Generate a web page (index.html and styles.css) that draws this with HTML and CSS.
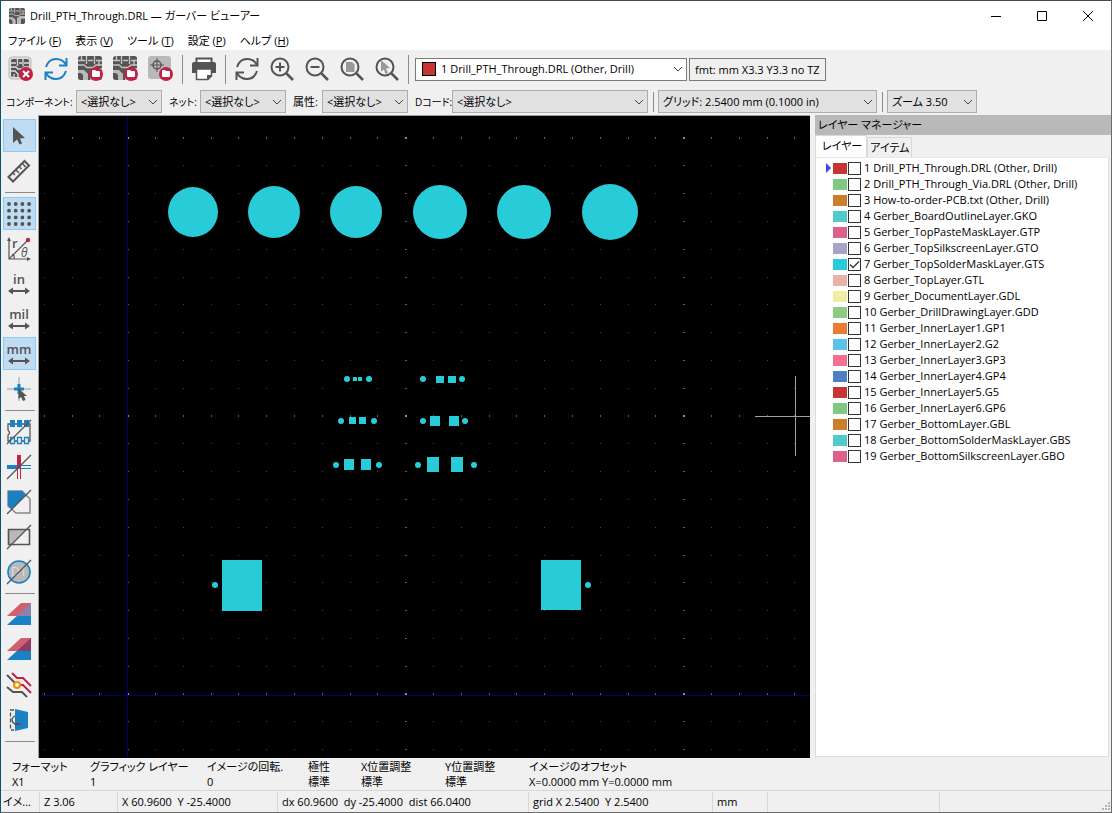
FILE: index.html
```html
<!DOCTYPE html>
<html lang="ja">
<head>
<meta charset="utf-8">
<title>Drill_PTH_Through.DRL — ガーバー ビューアー</title>
<link rel="stylesheet" href="styles.css">
</head>
<body>
<svg class="defs" width="0" height="0" aria-hidden="true">
  <defs>
    <g id="board">
      <rect width="24" height="24" rx="2.500" fill="#545454"/>
      <path d="M10 24V18L6 14H0V17H3L5 19V24ZM12 24V15L16 12H24V16H18V24Z" fill="#b9b9b9"/>
      <path d="M0 4.500H7M10 4.500H15M18 4.500H24M8.500 0V8M16.500 0V8M3.500 0V4M21 5V10M0 9H6L9 11.500H15L18 9H24" fill="none" stroke="#c4c4c4" stroke-width="1.400"/>
    </g>
    <g id="folder-badge">
      <circle cx="18" cy="18" r="7" fill="#c22147"/>
      <path d="M14 15Q14 14 15 14H17L18 15H21Q22 15 22 16V20Q22 21 21 21H15Q14 21 14 20Z" fill="#fff"/>
    </g>
    <g id="refresh" fill="none" stroke-width="2">
      <path d="M2 10C4 4 8 2 12 2C16 2 20 4 22 8M22 14C20 20 16 22 12 22C8 22 4 20 2 16"/>
      <path d="M22.500 1V8.500H15M1.500 23V15.500H9"/>
    </g>
    <g id="lens" fill="none" stroke="#545454">
      <circle cx="10" cy="10" r="8.500" stroke-width="2"/>
      <path d="M16.500 16.500L23 23" stroke-width="2.500"/>
    </g>
    <g id="span-arrow" fill="#545454">
      <path d="M1 19L6 15.500V18H18V15.500L23 19L18 22.500V20H6V22.500Z"/>
    </g>
    <path id="grid-row" d="M0 0h1v1h-1zM28 0h1v1h-1zM56 0h1v1h-1zM84 0h1v1h-1zM111 0h1v1h-1zM139 0h1v1h-1zM167 0h1v1h-1zM195 0h1v1h-1zM223 0h1v1h-1zM250 0h1v1h-1z"/>
    <pattern id="grid" x="127" y="137" width="278" height="278" patternUnits="userSpaceOnUse">
      <g fill="#484848">
        <use href="#grid-row" y="28"/><use href="#grid-row" y="56"/><use href="#grid-row" y="84"/><use href="#grid-row" y="112"/><use href="#grid-row" y="140"/><use href="#grid-row" y="167"/><use href="#grid-row" y="195"/><use href="#grid-row" y="223"/><use href="#grid-row" y="251"/>
      </g>
      <g fill="#606060"><use href="#grid-row"/><use href="#grid-row" y="1"/></g>
      <path d="M0 28h2v1h-2zM0 56h2v1h-2zM0 84h2v1h-2zM0 112h2v1h-2zM0 140h2v1h-2zM0 167h2v1h-2zM0 195h2v1h-2zM0 223h2v1h-2zM0 251h2v1h-2z" fill="#606060"/>
      <path d="M0 0h2v2h-2z" fill="#909090"/>
    </pattern>
  </defs>
</svg>

<div class="window">
  <header class="titlebar">
    <svg class="app-icon" viewBox="0 0 24 24" aria-hidden="true"><use href="#board"/></svg>
    <h1 class="title">Drill_PTH_Through.DRL — ガーバー ビューアー</h1>
    <div class="window-buttons">
      <button class="window-button" aria-label="最小化"><svg width="12" height="12" viewBox="0 0 12 12"><path d="M1 6.500H11" stroke="#000"/></svg></button>
      <button class="window-button" aria-label="最大化"><svg width="12" height="12" viewBox="0 0 12 12"><path d="M1.500 1.500H10.500V10.500H1.500Z" fill="none" stroke="#000"/></svg></button>
      <button class="window-button" aria-label="閉じる"><svg width="12" height="12" viewBox="0 0 12 12"><path d="M1 1L11 11M11 1L1 11" stroke="#000"/></svg></button>
    </div>
  </header>

  <nav class="menubar">
    <button class="menu">ファイル (<u>F</u>)</button>
    <button class="menu">表示 (<u>V</u>)</button>
    <button class="menu">ツール (<u>T</u>)</button>
    <button class="menu">設定 (<u>P</u>)</button>
    <button class="menu">ヘルプ (<u>H</u>)</button>
  </nav>

  <div class="toolbar">
    <button class="tool" aria-label="全レイヤーをクリア"><svg viewBox="0 0 26 26">
      <rect x="1" y="1" width="22" height="22" rx="3" fill="#dedede" stroke="#b9b9b9"/>
      <rect x="3" y="3" width="18" height="18" rx="2" fill="#545454"/>
      <path d="M3 7H8M11 7H14M16 7H21M9.500 3V10M15 3V10M3 11H8L10 13H14L16 11H21M3 15H7L10 18V21M13 21V16H21M6 18V21" fill="none" stroke="#dedede" stroke-width="1.300"/>
      <circle cx="18" cy="18" r="7" fill="#c22147"/><path d="M15 15L21 21M21 15L15 21" stroke="#fff" stroke-width="2"/></svg></button>
    <button class="tool" aria-label="全レイヤーを再読み込み"><svg viewBox="-1 -1 26 26"><use href="#refresh" stroke="#1a81c4"/></svg></button>
    <button class="tool" aria-label="ガーバーを開く"><svg viewBox="0 0 26 26"><use href="#board"/><use href="#folder-badge"/></svg></button>
    <button class="tool" aria-label="ガーバージョブを開く"><svg viewBox="0 0 26 26"><use href="#board"/><use href="#folder-badge"/></svg></button>
    <button class="tool" aria-label="ドリルファイルを開く"><svg viewBox="0 0 26 26"><rect width="23" height="23" rx="3" fill="#b9b9b9"/><g fill="none" stroke="#545454"><circle cx="9" cy="9" r="4" stroke-width="1.500"/><path d="M9 2V16M2 9H16"/></g><use href="#folder-badge"/></svg></button>
    <span class="rule"></span>
    <button class="tool" aria-label="印刷"><svg viewBox="0 0 26 26"><path d="M5.500 7V2.500H20.500V7" fill="#fff" stroke="#545454" stroke-width="2"/><path d="M1 8Q1 6 3 6H23Q25 6 25 8V17H1Z" fill="#545454"/><path d="M5.500 13H20.500V20L17 23.500H5.500Z" fill="#fff" stroke="#545454" stroke-width="1.500"/><path d="M16 24V19H21" fill="#545454"/></svg></button>
    <span class="rule"></span>
    <button class="tool" aria-label="再描画"><svg viewBox="-1 -1 26 26"><use href="#refresh" stroke="#545454"/></svg></button>
    <button class="tool" aria-label="ズームイン"><svg viewBox="-1 -1 26 26"><use href="#lens"/><path d="M10 5.500V14.500M5.500 10H14.500" stroke="#545454" stroke-width="2"/></svg></button>
    <button class="tool" aria-label="ズームアウト"><svg viewBox="-1 -1 26 26"><use href="#lens"/><path d="M5.500 10H14.500" stroke="#545454" stroke-width="2"/></svg></button>
    <button class="tool" aria-label="全体表示"><svg viewBox="-1 -1 26 26"><use href="#lens"/><path d="M6 5H12L14.500 7.500V15H6Z" fill="#999"/></svg></button>
    <button class="tool" aria-label="選択範囲を拡大"><svg viewBox="-1 -1 26 26"><use href="#lens"/><path d="M6 3L15 11L11 11.500L13 16L10.500 17L9 12.500L6 14.500Z" fill="#999"/></svg></button>
    <span class="rule"></span>
    <div class="layer-pick"><span class="chip"></span><select class="combo combo-white" aria-label="レイヤー"><option>1 Drill_PTH_Through.DRL (Other, Drill)</option></select></div>
    <input class="format" aria-label="フォーマット" readonly value="fmt: mm X3.3 Y3.3 no TZ">
  </div>

  <div class="filters">
    <label class="filter-label label-component" for="component">コンポーネント:</label><select class="combo combo-small" id="component"><option>&lt;選択なし&gt;</option></select>
    <label class="filter-label label-net" for="net">ネット:</label><select class="combo combo-small" id="net"><option>&lt;選択なし&gt;</option></select>
    <label class="filter-label label-attr" for="attr">属性:</label><select class="combo combo-small" id="attr"><option>&lt;選択なし&gt;</option></select>
    <label class="filter-label label-dcode" for="dcode">Dコード:</label><select class="combo combo-dcode" id="dcode"><option>&lt;選択なし&gt;</option></select>
    <span class="rule rule-filter"></span>
    <select class="combo combo-grid" aria-label="グリッド"><option>グリッド: 2.5400 mm (0.1000 in)</option></select>
    <span class="rule rule-filter"></span>
    <select class="combo combo-zoom" aria-label="ズーム"><option>ズーム 3.50</option></select>
  </div>

  <main class="work">
    <aside class="side">
      <button class="tool tool-on" aria-label="選択"><svg viewBox="0 0 24 24"><path d="M6 3V19L10 15.500L12.500 20.500L15 19.500L13 14.500L18 14Z" fill="#545454"/></svg></button>
      <button class="tool" aria-label="計測"><svg viewBox="0 0 24 24"><g fill="none" stroke="#545454" stroke-width="2"><path d="M1.500 18L17.500 2L22 6.500L6 22.500Z"/><path d="M6 14L8 16M9 11L12 14M12.500 8L14.500 10M16 5L18.500 8" stroke-width="1.500"/></g></svg></button>
      <span class="divider"></span>
      <button class="tool tool-on" aria-label="グリッド"><svg viewBox="0 0 24 24"><path d="M2 2H22.500M2 8.700H22.500M2 15.400H22.500M2 22H22.500" stroke="#545454" stroke-width="3.800" stroke-linecap="round" stroke-dasharray="0 6.700"/></svg></button>
      <button class="tool" aria-label="極座標"><svg viewBox="0 0 24 24"><path d="M2 3V22H21M2 22L20 4M7 22Q8 18 5 17" fill="none" stroke="#545454" stroke-width="1.200"/><path d="M0 4L2 0L4 4ZM20 20L24 22L20 24Z" fill="#545454"/><circle cx="21" cy="3" r="2.200" fill="#c22147"/><text class="glyph-large" x="5" y="11">r</text><text class="glyph-theta" x="14" y="20">θ</text></svg></button>
      <button class="tool" aria-label="インチ"><svg viewBox="0 0 24 24"><text class="glyph" x="12" y="12">in</text><use href="#span-arrow"/></svg></button>
      <button class="tool" aria-label="ミル"><svg viewBox="0 0 24 24"><text class="glyph" x="12" y="12">mil</text><use href="#span-arrow"/></svg></button>
      <button class="tool tool-on" aria-label="ミリメートル"><svg viewBox="0 0 24 24"><text class="glyph" x="12" y="12">mm</text><use href="#span-arrow"/></svg></button>
      <button class="tool" aria-label="カーソル形状"><svg viewBox="0 0 24 24"><path d="M12 0V24M0 12H24" stroke="#999"/><path d="M12 7V17M7 12H17" stroke="#1a81c4" stroke-width="3"/><path d="M11.500 11.500V22L14 20L16 24L18.500 23L17 19H20Z" fill="#545454"/></svg></button>
      <span class="divider"></span>
      <button class="tool" aria-label="フラッシュ部をスケッチ"><svg viewBox="0 0 24 24"><path d="M1 4H23V21H1V15Q4 13 1 10Z" fill="none" stroke="#545454" stroke-width="1.300"/><path d="M3 0H8V7H3ZM10 0H15V7H10ZM17 0H22V7H17Z" fill="#1a81c4"/><path d="M3.500 17.500H7.500V23.500H3.500ZM10.500 17.500H14.500V23.500H10.500ZM17.500 17.500H21.500V23.500H17.500Z" fill="#f0f0f0" stroke="#1a81c4" stroke-width="1.300"/><path d="M0 24L24 0" stroke="#545454" stroke-width="1.300"/></svg></button>
      <button class="tool" aria-label="ラインをスケッチ"><svg viewBox="0 0 24 24"><path d="M0 12H13" stroke="#1a81c4" stroke-width="4"/><path d="M12 10.500H24M12 13.500H24" stroke="#1a81c4"/><path d="M12 0V12" stroke="#c22147" stroke-width="4"/><path d="M10.500 11V24M13.500 11V24" stroke="#c22147"/><path d="M0 24L24 0" stroke="#545454" stroke-width="1.300"/></svg></button>
      <button class="tool" aria-label="ポリゴンをスケッチ"><svg viewBox="0 0 24 24"><path d="M1 1H15L23 9V23H9L1 16Z" fill="#f0f0f0" stroke="#888" stroke-width="1.500"/><path d="M1 1H15L19 5L5 19L1 16Z" fill="#1a81c4"/><path d="M0 24L24 0" stroke="#545454" stroke-width="1.300"/></svg></button>
      <button class="tool" aria-label="ネガティブ表示"><svg viewBox="0 0 24 24"><path d="M1.500 4.500H22.500V19.500H1.500Z" fill="#f0f0f0"/><path d="M1.500 4.500H19.500L4.500 19.500H1.500Z" fill="#b9b9b9"/><path d="M1.500 4.500H22.500V19.500H1.500Z" fill="none" stroke="#545454" stroke-width="1.600"/><path d="M0 24L24 0" stroke="#545454" stroke-width="1.300"/></svg></button>
      <button class="tool" aria-label="Dコード表示"><svg viewBox="0 0 24 24"><circle cx="12" cy="12" r="11" fill="#b9b9b9" stroke="#1a81c4" stroke-width="1.600"/><text class="glyph-code" x="4" y="16">D1</text><path d="M0 24L24 0" stroke="#545454" stroke-width="1.300"/></svg></button>
      <span class="divider"></span>
      <button class="tool" aria-label="差分モード"><svg viewBox="0 0 24 24"><path d="M0 22L12 11H24V22Z" fill="#1a81c4"/><path d="M0 13L14 0H24V13Z" fill="#d0606f"/><path d="M10 13L24 0V13Z" fill="#8b82ad"/></svg></button>
      <button class="tool" aria-label="XORモード"><svg viewBox="0 0 24 24"><path d="M0 22L12 11H24V22Z" fill="#1a81c4"/><path d="M0 13L14 0H24V13Z" fill="#d0606f"/><path d="M10 13L24 0V13Z" fill="#8b3c65"/></svg></button>
      <button class="tool" aria-label="高コントラスト"><svg viewBox="0 0 24 24"><g fill="none" stroke-width="2"><path d="M5 0L10 5H16L24 13M11 12H16L24 20" stroke="#c22147"/><path d="M0 2L8 10M0 14L6 19H15L20 24" stroke="#545454"/><circle cx="10" cy="12" r="3" fill="#f0f0f0" stroke="#f29100"/></g></svg></button>
      <button class="tool" aria-label="反転表示"><svg viewBox="0 0 24 24"><path d="M8 1L21 4V20L8 23Z" fill="#1a81c4"/><path d="M7 2H3.500V22H7" fill="none" stroke="#545454" stroke-width="1.300" stroke-dasharray="4 2"/><path d="M8 8Q5 9 5 12Q6 17 11 16" fill="none" stroke="#545454" stroke-width="1.300"/><path d="M7 15Q11 14 15 16Q11 18 8 17Z" fill="#545454"/></svg></button>
      <span class="divider"></span>
    </aside>

    <div class="canvas">
      <svg class="board-view" role="img" aria-label="Gerber_TopSolderMaskLayer.GTS">
        <g transform="translate(-39 -116)">
          <rect x="39" y="116" width="100%" height="100%" fill="url(#grid)"/>
          <path d="M127.500 116V2000M39 695.500H3000" stroke="#000070" stroke-width="1"/>
          <g fill="#28ccd9">
            <circle cx="193" cy="212" r="25"/><circle cx="274" cy="212" r="26"/><circle cx="356" cy="212" r="26"/><circle cx="440" cy="212" r="27"/><circle cx="524" cy="212" r="27"/><circle cx="610" cy="212" r="28"/>
            <path d="M353 377h4v4h-4zM358 377h4v4h-4zM436 376h8v7h-8zM448 376h8v7h-8zM349 417h7v7h-7zM359 417h7v7h-7zM430 416h10v10h-10zM449 416h10v10h-10zM344 459h10v11h-10zM361 459h10v11h-10zM427 457h12v15h-12zM451 457h12v15h-12zM222 560h40v51h-40zM541 560h40v50h-40z"/>
            <circle cx="347" cy="379" r="3"/><circle cx="369" cy="379" r="3"/><circle cx="423" cy="379" r="3"/><circle cx="462" cy="379" r="3"/>
            <circle cx="341" cy="421" r="3"/><circle cx="374" cy="421" r="3"/><circle cx="423" cy="421" r="3"/><circle cx="465" cy="421" r="3"/>
            <circle cx="336" cy="465" r="3"/><circle cx="379" cy="465" r="3"/><circle cx="418" cy="465" r="3"/><circle cx="474" cy="465" r="3"/>
            <circle cx="215" cy="585" r="3"/><circle cx="588" cy="585" r="3"/>
          </g>
          <path d="M755 416.500H836M795.500 376V456" stroke="#a0a0a0"/>
        </g>
      </svg>
    </div>

    <section class="manager">
      <h2 class="manager-title">レイヤー マネージャー</h2>
      <div class="tabs" role="tablist">
        <button class="tab tab-on" role="tab" aria-selected="true">レイヤー</button>
        <button class="tab" role="tab" aria-selected="false">アイテム</button>
      </div>
      <ul class="layers">
        <li class="layer layer-active"><span class="swatch red"></span><input class="check" type="checkbox" id="l1"><label for="l1">1 Drill_PTH_Through.DRL (Other, Drill)</label></li>
        <li class="layer"><span class="swatch green"></span><input class="check" type="checkbox" id="l2"><label for="l2">2 Drill_PTH_Through_Via.DRL (Other, Drill)</label></li>
        <li class="layer"><span class="swatch brown"></span><input class="check" type="checkbox" id="l3"><label for="l3">3 How-to-order-PCB.txt (Other, Drill)</label></li>
        <li class="layer"><span class="swatch teal"></span><input class="check" type="checkbox" id="l4"><label for="l4">4 Gerber_BoardOutlineLayer.GKO</label></li>
        <li class="layer"><span class="swatch pink"></span><input class="check" type="checkbox" id="l5"><label for="l5">5 Gerber_TopPasteMaskLayer.GTP</label></li>
        <li class="layer"><span class="swatch lavender"></span><input class="check" type="checkbox" id="l6"><label for="l6">6 Gerber_TopSilkscreenLayer.GTO</label></li>
        <li class="layer"><span class="swatch cyan"></span><input class="check" type="checkbox" id="l7" checked><label for="l7">7 Gerber_TopSolderMaskLayer.GTS</label></li>
        <li class="layer"><span class="swatch salmon"></span><input class="check" type="checkbox" id="l8"><label for="l8">8 Gerber_TopLayer.GTL</label></li>
        <li class="layer"><span class="swatch yellow"></span><input class="check" type="checkbox" id="l9"><label for="l9">9 Gerber_DocumentLayer.GDL</label></li>
        <li class="layer"><span class="swatch lime"></span><input class="check" type="checkbox" id="l10"><label for="l10">10 Gerber_DrillDrawingLayer.GDD</label></li>
        <li class="layer"><span class="swatch orange"></span><input class="check" type="checkbox" id="l11"><label for="l11">11 Gerber_InnerLayer1.GP1</label></li>
        <li class="layer"><span class="swatch sky"></span><input class="check" type="checkbox" id="l12"><label for="l12">12 Gerber_InnerLayer2.G2</label></li>
        <li class="layer"><span class="swatch rose"></span><input class="check" type="checkbox" id="l13"><label for="l13">13 Gerber_InnerLayer3.GP3</label></li>
        <li class="layer"><span class="swatch blue"></span><input class="check" type="checkbox" id="l14"><label for="l14">14 Gerber_InnerLayer4.GP4</label></li>
        <li class="layer"><span class="swatch red"></span><input class="check" type="checkbox" id="l15"><label for="l15">15 Gerber_InnerLayer5.G5</label></li>
        <li class="layer"><span class="swatch green"></span><input class="check" type="checkbox" id="l16"><label for="l16">16 Gerber_InnerLayer6.GP6</label></li>
        <li class="layer"><span class="swatch brown"></span><input class="check" type="checkbox" id="l17"><label for="l17">17 Gerber_BottomLayer.GBL</label></li>
        <li class="layer"><span class="swatch teal"></span><input class="check" type="checkbox" id="l18"><label for="l18">18 Gerber_BottomSolderMaskLayer.GBS</label></li>
        <li class="layer"><span class="swatch pink"></span><input class="check" type="checkbox" id="l19"><label for="l19">19 Gerber_BottomSilkscreenLayer.GBO</label></li>
      </ul>
    </section>
  </main>

  <dl class="info">
    <div><dt>フォーマット</dt><dd>X1</dd></div>
    <div><dt>グラフィック レイヤー</dt><dd>1</dd></div>
    <div><dt>イメージの回転.</dt><dd>0</dd></div>
    <div><dt>極性</dt><dd>標準</dd></div>
    <div><dt>X位置調整</dt><dd>標準</dd></div>
    <div><dt>Y位置調整</dt><dd>標準</dd></div>
    <div><dt>イメージのオフセット</dt><dd>X=0.0000 mm Y=0.0000 mm</dd></div>
  </dl>

  <footer class="status">
    <span>イメ...</span><span>Z 3.06</span><span>X 60.9600&nbsp; Y -25.4000</span><span>dx 60.9600&nbsp; dy -25.4000&nbsp; dist 66.0400</span><span>grid X 2.5400&nbsp; Y 2.5400</span><span>mm</span><span></span>
    <span class="grip-cell"><svg width="10" height="10" viewBox="0 0 10 10" aria-hidden="true"><path d="M7 0h2v2h-2zM4 3h2v2h-2zM7 3h2v2h-2zM1 6h2v2h-2zM4 6h2v2h-2zM7 6h2v2h-2z" fill="#b4b4b4"/></svg></span>
  </footer>
</div>
</body>
</html>
```
FILE: styles.css
```css
* { box-sizing: border-box; }

body {
  margin: 0;
  background: #f0f0f0;
  color: #000;
  font: 11px/16px "Open Sans", "Noto Sans CJK JP", sans-serif;
  font-feature-settings: "palt";
}

button, select, input { font: inherit; font-feature-settings: inherit; color: inherit; }
button { padding: 0; border: 0; background: none; }

.defs { position: absolute; }

.window {
  display: flex;
  flex-direction: column;
  min-height: 100vh;
  border: 1px solid #6a6a6a;
  border-left-color: #10506f;
  border-top-color: #3c4c58;
}

.titlebar { display: flex; align-items: center; height: 29px; padding-left: 8px; background: #fff; }
.app-icon { width: 16px; height: 16px; margin-right: 5px; }
.title { flex: 1; margin: 0; font-size: 11px; font-weight: 400; }
.window-buttons { display: flex; }
.window-button { width: 46px; height: 28px; display: grid; place-items: center; }

.menubar { display: flex; gap: 14px; height: 20px; padding: 2px 0 0 7px; background: #fff; white-space: nowrap; }

.toolbar { display: flex; align-items: center; gap: 2px; height: 38px; padding-left: 3px; }
.tool { flex: none; width: 33px; height: 33px; display: grid; place-items: center; border: 1px solid transparent; }
.tool svg { width: 24px; height: 24px; overflow: visible; }
.toolbar .tool svg { width: 26px; height: 26px; }
.tool-on { background: #c0dcf3; border-color: #90c8f6; }
.rule { flex: none; width: 6px; height: 29px; display: flex; justify-content: center; }
.rule::before { content: ""; width: 1px; background: #8c8c8c; }
.rule-filter { height: 20px; margin: 0 2px; }

.glyph, .glyph-large { font: 600 13px "Open Sans", sans-serif; fill: #545454; }
.glyph { text-anchor: middle; }
.glyph-theta { font: italic 12px "Open Sans", sans-serif; fill: #545454; }
.glyph-code { font: 12px "Open Sans", sans-serif; fill: #dedede; }

.combo {
  flex: none;
  height: 23px;
  padding: 0 20px 0 4px;
  border: 1px solid #adadad;
  border-radius: 0;
  appearance: none;
  background: #e1e1e1 url("data:image/svg+xml,%3Csvg xmlns='http://www.w3.org/2000/svg' width='10' height='6'%3E%3Cpath d='M1 1L5 5L9 1' fill='none' stroke='%23444'/%3E%3C/svg%3E") no-repeat right 3px center;
}
.layer-pick { position: relative; flex: none; width: 272px; margin-left: 2px; }
.combo-white { width: 100%; padding-left: 25px; background-color: #fff; border-color: #7a7a7a; vertical-align: top; }
.chip { position: absolute; left: 7px; top: 4px; width: 14px; height: 14px; background: #c83434; border: 1px solid #000; }
.format { width: 137px; height: 23px; padding: 0 5px; border: 1px solid #7a7a7a; background: #f0f0f0; }

.filters { display: flex; align-items: center; height: 27px; padding-left: 5px; white-space: nowrap; }
.filter-label { flex: none; font-size: 10px; }
.label-component { width: 70px; }
.label-net, .label-attr, .label-dcode { padding-left: 7px; }
.label-net { width: 38px; }
.label-attr { width: 36px; font-size: 11px; }
.label-dcode { width: 44px; }
.combo-small { width: 86px; }
.combo-dcode { width: 196px; }
.combo-grid { width: 219px; }
.combo-zoom { width: 90px; }

.work { flex: 1; display: flex; min-height: 0; }
.side { flex: none; width: 37px; display: flex; flex-direction: column; gap: 2px; padding: 4px 0 0 2px; }
.side .tool { padding-right: 1px; }
.divider { height: 6px; margin: 0 3px 0 2px; display: grid; align-items: center; }
.divider::before { content: ""; height: 1px; background: #8c8c8c; }

.canvas { position: relative; flex: 1; min-width: 0; background: #000; border: 1px solid #a0a0a0; border-width: 1px 0 0 1px; }
.board-view { position: absolute; width: 100%; height: 100%; }

.manager { flex: none; width: 301px; display: flex; flex-direction: column; padding: 0 2px 1px 5px; }
.manager-title { margin: 0 -2px 0 0; height: 20px; padding-left: 3px; background: #b9b9b9; font-size: 11px; font-weight: 400; line-height: 19px; }
.tabs { display: flex; align-items: flex-end; height: 22px; }
.tab { height: 20px; padding: 0 2px; background: #f0f0f0; border: 1px solid #d9d9d9; border-bottom: 0; }
.tab-on { height: 22px; padding: 0 4px 2px 6px; background: #fff; }
.layers { flex: 1; margin: 0; padding: 2px 0 0 10px; list-style: none; background: #fff; border: 1px solid #dcdcdc; border-top-color: #e8e8e8; white-space: nowrap; }
.layer { display: flex; align-items: center; height: 16px; padding-left: 7px; }
.layer-active { padding-left: 0; }
.layer-active::before { content: ""; width: 5px; height: 10px; margin-right: 2px; background: #4040ff; clip-path: polygon(0 0, 100% 50%, 0 100%); }
.swatch { width: 14px; height: 11px; margin-right: 1px; }
.check { width: 13px; height: 13px; margin: 0 3px 0 0; appearance: none; border: 1px solid #333; background: #fff; }
.check:checked { background: #fff url("data:image/svg+xml,%3Csvg xmlns='http://www.w3.org/2000/svg' width='11' height='11'%3E%3Cpath d='M1 5.500L4 8.500L10 2.500' fill='none' stroke='%23333' stroke-width='1.300'/%3E%3C/svg%3E") center no-repeat; }

.red { background: #c83434; }
.green { background: #7fc87f; }
.brown { background: #cd7d2c; }
.teal { background: #4fcbcb; }
.pink { background: #db628b; }
.lavender { background: #a7a5c6; }
.cyan { background: #28ccd9; }
.salmon { background: #e8b2a7; }
.yellow { background: #f2eda1; }
.lime { background: #8dcb81; }
.orange { background: #ed7c33; }
.sky { background: #5bc3eb; }
.rose { background: #f76f8e; }
.blue { background: #4d7fc4; }

.info {
  display: grid;
  grid-template-columns: 78px 117px 101px 53px 84px 84px 1fr;
  margin: 0;
  padding: 1px 0 0 11px;
  height: 32px;
  line-height: 15px;
  white-space: nowrap;
}
.info dt, .info dd { margin: 0; }

.status {
  display: grid;
  grid-template-columns: 38px 78px 160px 251px 184px 55px 172px 1fr;
  height: 22px;
  padding: 1px 0;
  border-top: 1px solid #d7d7d7;
  line-height: 20px;
  white-space: nowrap;
}
.status span { padding-left: 4px; border-left: 1px solid #d7d7d7; }
.status span:first-child { padding-left: 2px; border-left: 0; }
.status .grip-cell { display: flex; justify-content: flex-end; align-items: flex-end; }
```
